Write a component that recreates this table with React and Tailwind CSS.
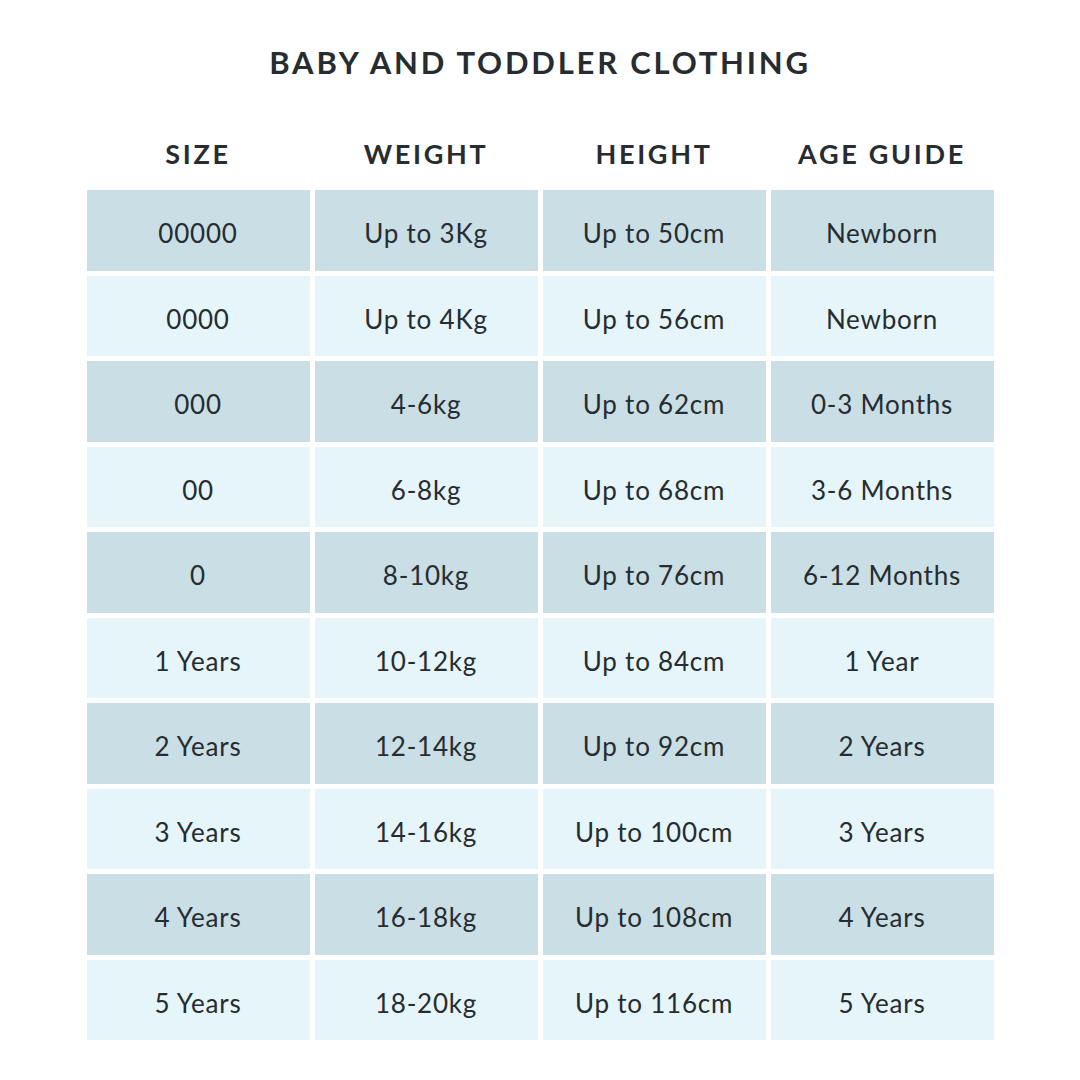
const rows = [
  ["00000", "Up to 3Kg", "Up to 50cm", "Newborn"],
  ["0000", "Up to 4Kg", "Up to 56cm", "Newborn"],
  ["000", "4-6kg", "Up to 62cm", "0-3 Months"],
  ["00", "6-8kg", "Up to 68cm", "3-6 Months"],
  ["0", "8-10kg", "Up to 76cm", "6-12 Months"],
  ["1 Years", "10-12kg", "Up to 84cm", "1 Year"],
  ["2 Years", "12-14kg", "Up to 92cm", "2 Years"],
  ["3 Years", "14-16kg", "Up to 100cm", "3 Years"],
  ["4 Years", "16-18kg", "Up to 108cm", "4 Years"],
  ["5 Years", "18-20kg", "Up to 116cm", "5 Years"],
];

const headers = ["SIZE", "WEIGHT", "HEIGHT", "AGE GUIDE"];

export default function App() {
  return (
    <div
      className="w-[1080px] h-[1080px] bg-white text-[#262c30] flex flex-col items-center"
      style={{ fontFamily: "Lato, 'Open Sans', sans-serif" }}
    >
      <h1 className="mt-[42px] text-[31px] font-bold tracking-[0.09em] leading-[40px]">
        BABY AND TODDLER CLOTHING
      </h1>

      <div className="mt-[55px] w-[907px] grid grid-cols-4 gap-x-[5px]">
        {headers.map((h) => (
          <div
            key={h}
            className="text-center text-[27px] font-bold tracking-[0.1em] leading-[34px]"
          >
            {h}
          </div>
        ))}
      </div>

      <div className="mt-[19px] w-[907px] flex flex-col gap-[5px]">
        {rows.map((row, i) => (
          <div key={row[0]} className="grid grid-cols-4 gap-x-[5px]">
            {row.map((cell, j) => (
              <div
                key={j}
                className={`h-[80.5px] pt-[7px] flex items-center justify-center text-[26px] tracking-[0.03em] ${
                  i % 2 === 0 ? "bg-[#c9dee5]" : "bg-[#e5f5fa]"
                }`}
              >
                {cell}
              </div>
            ))}
          </div>
        ))}
      </div>
    </div>
  );
}
